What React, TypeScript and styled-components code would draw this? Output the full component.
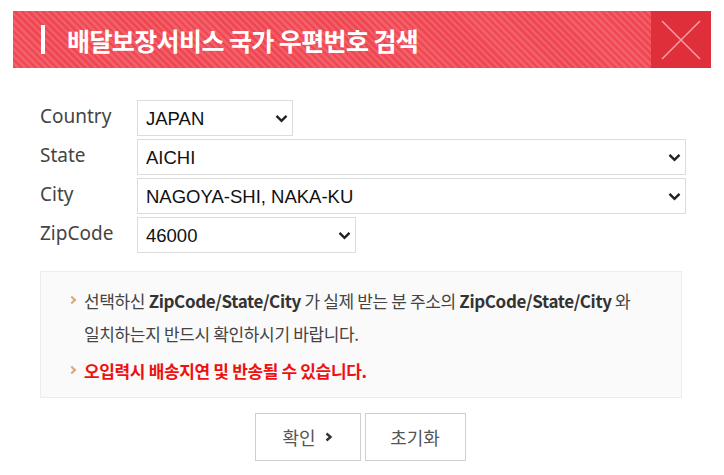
import styled, {createGlobalStyle} from 'styled-components';

const GlobalStyle = createGlobalStyle`
  html, body {
    margin: 0;
    padding: 0;
    background: #fff;
  }
  body {
    font-family: "Noto Sans", "Noto Sans CJK KR", sans-serif;
  }
`;

const Popup = styled.div`
  width: 724px;
  padding: 11px 13px 0 13px;
  box-sizing: border-box;
`;

const Header = styled.div`
  height: 57px;
  display: flex;
  align-items: center;
  background-color: #ef4853;
  background-image: repeating-linear-gradient(
    45deg,
    #ef4853 0px,
    #ef4853 2.5px,
    #f25f68 2.5px,
    #f25f68 5px
  );

  h1 {
    flex: 1;
    margin: 0;
    display: flex;
    align-items: center;
    padding-left: 28px;
    color: #fff;
    font-family: "Noto Sans CJK KR", sans-serif;
    font-size: 25px;
    font-weight: bold;
    letter-spacing: -0.6px;

    &::before {
      content: '';
      width: 4px;
      height: 29px;
      background: #fff;
      margin-right: 22px;
    }
  }
`;

const CloseButton = styled.button`
  width: 60px;
  height: 57px;
  border: 0;
  padding: 0;
  background: #de2f3b;
  display: flex;
  align-items: center;
  justify-content: center;
  cursor: pointer;

  svg {
    width: 40px;
    height: 40px;
  }
`;

const Form = styled.div`
  margin: 32px 0 0 27px;
  display: grid;
  grid-template-columns: 97px 1fr;
  row-gap: 3px;
  width: 646px;
`;

const Label = styled.label`
  display: flex;
  align-items: center;
  font-size: 19px;
  color: #444;
  padding-bottom: 4px;
`;

const SelectWrap = styled.div<{ $width?: number }>`
  position: relative;
  width: ${p => (p.$width ? `${p.$width}px` : '549px')};
  height: 36px;

  select {
    width: 100%;
    height: 100%;
    appearance: none;
    border: 1px solid #dcdcdc;
    border-radius: 0;
    background: #fff;
    padding: 0 0 0 8px;
    font-family: "Liberation Sans", Arial, sans-serif;
    font-size: 18.5px;
    color: #111;
    outline: none;
  }

  svg {
    position: absolute;
    right: 5px;
    top: 14px;
    width: 13px;
    height: 9px;
    pointer-events: none;
  }
`;

const Chevron = () => (
  <svg viewBox="0 0 13 9">
    <path d="M1.5 1.8 L6.5 6.8 L11.5 1.8" fill="none" stroke="#222" strokeWidth="2.4" />
  </svg>
);

const Notice = styled.ul`
  margin: 18px 0 0 27px;
  width: 642px;
  box-sizing: border-box;
  list-style: none;
  padding: 12px 16px 10px 27px;
  background: #fafafa;
  border: 1px solid #ececec;
  font-family: "Noto Sans CJK KR", sans-serif;
  font-size: 17px;
  letter-spacing: -0.35px;
  color: #444;

  li {
    position: relative;
    padding-left: 16px;
    line-height: 33px;
    white-space: nowrap;
  }

  li + li {
    margin-top: 4px;
  }

  li::before {
    content: '';
    position: absolute;
    left: 1px;
    top: 13px;
    width: 4px;
    height: 4px;
    border-top: 2px solid #d9a878;
    border-right: 2px solid #d9a878;
    transform: rotate(45deg);
  }

  b {
    color: #333;
  }

  .warn {
    color: #ee1111;
    font-weight: bold;
  }
`;

const Buttons = styled.div`
  display: flex;
  justify-content: center;
  gap: 4px;
  margin: 15px 0 0 0;
  padding-right: 4px;
`;

const Button = styled.button<{ $width: number }>`
  width: ${p => p.$width}px;
  height: 48px;
  border: 1px solid #cfcfcf;
  background: #fff;
  font-family: "Noto Sans CJK KR", sans-serif;
  font-size: 18px;
  color: #555;
  display: flex;
  align-items: center;
  justify-content: center;
  gap: 9px;
  cursor: pointer;

  svg {
    width: 8px;
    height: 10px;
  }
`;

const App = () => {
  return <>
    <GlobalStyle />
    <Popup>
      <Header>
        <h1>배달보장서비스 국가 우편번호 검색</h1>
        <CloseButton aria-label="close">
          <svg viewBox="0 0 40 40">
            <path d="M1 1 L39 39 M39 1 L1 39" stroke="#f7a5ab" strokeWidth="1.4" fill="none" />
          </svg>
        </CloseButton>
      </Header>

      <Form>
        <Label>Country</Label>
        <SelectWrap $width={156}>
          <select defaultValue="JAPAN"><option>JAPAN</option></select>
          <Chevron />
        </SelectWrap>

        <Label>State</Label>
        <SelectWrap>
          <select defaultValue="AICHI"><option>AICHI</option></select>
          <Chevron />
        </SelectWrap>

        <Label>City</Label>
        <SelectWrap>
          <select defaultValue="NAGOYA-SHI, NAKA-KU"><option>NAGOYA-SHI, NAKA-KU</option></select>
          <Chevron />
        </SelectWrap>

        <Label>ZipCode</Label>
        <SelectWrap $width={219}>
          <select defaultValue="46000"><option>46000</option></select>
          <Chevron />
        </SelectWrap>
      </Form>

      <Notice>
        <li>
          선택하신 <b>ZipCode/State/City</b> 가 실제 받는 분 주소의 <b>ZipCode/State/City</b> 와<br />
          일치하는지 반드시 확인하시기 바랍니다.
        </li>
        <li className="warn">오입력시 배송지연 및 반송될 수 있습니다.</li>
      </Notice>

      <Buttons>
        <Button $width={106}>
          확인
          <svg viewBox="0 0 8 10">
            <path d="M1.5 1.5 L5.5 5 L1.5 8.5" fill="none" stroke="#333" strokeWidth="2.4" />
          </svg>
        </Button>
        <Button $width={101}>초기화</Button>
      </Buttons>
    </Popup>
  </>
}

export default App;
